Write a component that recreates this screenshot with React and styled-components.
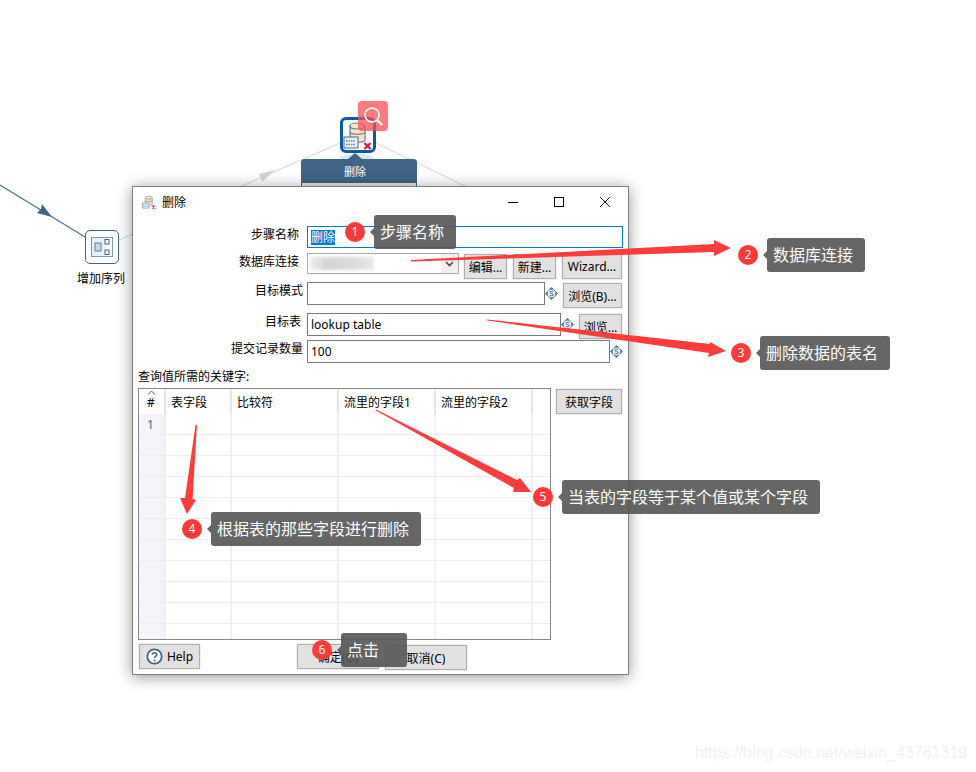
import styled, { createGlobalStyle } from "styled-components";

const GlobalStyle = createGlobalStyle`
  html, body { margin: 0; padding: 0; background: #fff; }
  body { font-family: "Noto Sans", "Noto Sans CJK SC", sans-serif; }
`;

const Page = styled.div`
  position: relative;
  width: 976px;
  height: 772px;
  overflow: hidden;
  background: #fff;
`;

const Layer = styled.svg`
  position: absolute;
  left: 0;
  top: 0;
  width: 976px;
  height: 772px;
  pointer-events: none;
`;

/* flow diagram behind the dialog */
const StepNode = styled.div`
  position: absolute;
  left: 85px;
  top: 230px;
  width: 34px;
  height: 34px;
  box-sizing: border-box;
  border: 1px solid #3f6484;
  border-radius: 5px;
  background: #fff;
  display: flex;
  align-items: center;
  justify-content: center;
`;

const StepLabel = styled.div`
  position: absolute;
  left: 61px;
  top: 270px;
  width: 80px;
  text-align: center;
  font-size: 12px;
  line-height: 18px;
  color: #000;
`;

const DeleteNode = styled.div`
  position: absolute;
  left: 340px;
  top: 117px;
  width: 36px;
  height: 36px;
  box-sizing: border-box;
  border: 3px solid #0b5aa6;
  border-radius: 6px;
  background: #fff;
  display: flex;
  align-items: center;
  justify-content: center;
`;

const SearchBadge = styled.div`
  position: absolute;
  left: 358px;
  top: 101px;
  width: 30px;
  height: 30px;
  border-radius: 4px;
  background: rgba(250, 80, 85, 0.75);
  display: flex;
  align-items: center;
  justify-content: center;
`;

const NodeMenu = styled.div`
  position: absolute;
  left: 301px;
  top: 159px;
  width: 116px;
  height: 27px;
  box-sizing: border-box;
  border: solid #3f6484;
  border-width: 0 1px;
  border-radius: 4px 4px 0 0;
  background: #e6e6e6;
  overflow: visible;
  &::before {
    content: "";
    position: absolute;
    left: 46px;
    top: -6px;
    border: solid transparent;
    border-width: 0 7px 6px;
    border-bottom-color: #3f6484;
  }
`;

const NodeMenuTitle = styled.div`
  height: 24px;
  margin: 0 -1px;
  padding-right: 8px;
  border-radius: 4px 4px 0 0;
  background: #3f6484;
  color: #fff;
  font-size: 11px;
  line-height: 25px;
  text-align: center;
`;

/* dialog window */
const Dialog = styled.div`
  position: absolute;
  left: 132px;
  top: 186px;
  width: 497px;
  height: 489px;
  box-sizing: border-box;
  border: 1px solid #7f7f7f;
  background: #fff;
  box-shadow: 0 2px 14px rgba(0, 0, 0, 0.42);
  display: flex;
  flex-direction: column;
  font-size: 12px;
  color: #000;
`;

const TitleBar = styled.div`
  height: 29px;
  display: flex;
  align-items: center;
  padding-left: 9px;
`;

const TitleText = styled.span`
  margin-left: 6px;
  font-size: 12px;
`;

const WindowButtons = styled.div`
  margin-left: auto;
  display: flex;
  align-items: center;
`;

const WindowButton = styled.div`
  width: 46px;
  height: 29px;
  display: flex;
  align-items: center;
  justify-content: center;
`;

const Form = styled.div`
  padding: 10px 5px 0 0;
  display: flex;
  flex-direction: column;
`;

const Row = styled.div`
  display: flex;
  align-items: flex-start;
  height: ${(p) => p.$h}px;
  margin-top: ${(p) => p.$top || 0}px;
`;

const Label = styled.div`
  width: 174px;
  box-sizing: border-box;
  padding-right: ${(p) => p.$pad}px;
  text-align: right;
  line-height: 17px;
  white-space: nowrap;
`;

const TextField = styled.div`
  width: ${(p) => p.$w}px;
  height: ${(p) => p.$height || 23}px;
  box-sizing: border-box;
  border: 1px solid ${(p) => (p.$focus ? "#0078d7" : "#7a7a7a")};
  padding-left: 3px;
  display: flex;
  align-items: center;
  font-size: 12px;
  background: #fff;
`;

const Selected = styled.span`
  background: #0078d7;
  color: #fff;
  line-height: 15px;
`;

const Select = styled.div`
  width: 152px;
  height: 21px;
  box-sizing: border-box;
  border: 1px solid #a9a9a9;
  display: flex;
  align-items: stretch;
  justify-content: space-between;
  position: relative;
`;

const Blur = styled.div`
  width: 64px;
  height: 13px;
  margin: 3px 0 0 2px;
  background: linear-gradient(90deg, #f0f0f0, #d4d4d4 25%, #dcdcdc 70%, #eaeaea);
  filter: blur(1.5px);
`;

const SelectArrow = styled.div`
  width: 17px;
  background: #f0f0f0;
  display: flex;
  align-items: center;
  justify-content: center;
`;

const Button = styled.div`
  width: ${(p) => p.$w}px;
  height: 25px;
  box-sizing: border-box;
  margin: ${(p) => p.$margin || "1px 0 0 6px"};
  border: 1px solid #adadad;
  box-shadow: 0 0 0 1px #f2f2f2;
  background: #e1e1e1;
  display: flex;
  align-items: center;
  justify-content: center;
  gap: 4px;
  font-size: 12px;
  white-space: nowrap;
`;

const VarSlot = styled.div`
  width: ${(p) => p.$w}px;
  height: 23px;
  display: flex;
  align-items: center;
  justify-content: flex-start;
`;

const SectionLabel = styled.div`
  margin: 5px 0 0 5px;
  height: 17px;
  line-height: 17px;
`;

const TableRow = styled.div`
  display: flex;
  align-items: flex-start;
  margin: 3px 0 0 5px;
`;

const Table = styled.div`
  width: 413px;
  height: 252px;
  box-sizing: border-box;
  border: 1px solid #828790;
  overflow: hidden;
`;

const Columns = styled.div`
  display: grid;
  grid-template-columns: 27px 66px 107px 97px 97px 17px;
  grid-auto-rows: 21px;
  &:first-child {
    grid-auto-rows: 25px;
  }
`;

const HeadCell = styled.div`
  position: relative;
  box-sizing: border-box;
  padding-left: ${(p) => p.$pad || 5}px;
  border-right: 2px solid #e5e5e5;
  border-top: 1px solid #fff;
  line-height: 25px;
  white-space: nowrap;
  &:last-child {
    border-right: 0;
  }
`;

const SortMark = styled.span`
  position: absolute;
  left: 8px;
  top: 0;
  line-height: 0;
`;

const Cell = styled.div`
  box-sizing: border-box;
  border-right: 2px solid #edf1f8;
  border-bottom: 1px solid #eceff3;
  padding-left: ${(p) => (p.$index ? 8 : 0)}px;
  background: ${(p) => (p.$index ? "#f5f5f7" : "#fff")};
  color: #3f6484;
  line-height: 21px;
  &:last-child {
    border-right: 0;
  }
`;

const Footer = styled.div`
  display: flex;
  align-items: flex-start;
  margin: 4px 0 0 6px;
`;

const FooterGroup = styled.div`
  display: flex;
  margin-left: 97px;
`;

/* red tutorial callouts */
const Callout = styled.div`
  position: absolute;
  left: ${(p) => p.$x}px;
  top: ${(p) => p.$y}px;
  height: 34px;
  display: flex;
  align-items: center;
  gap: 9px;
`;

const Badge = styled.div`
  width: 20px;
  height: 20px;
  border-radius: 50%;
  background: #ff3838;
  color: #fff;
  font-size: 12px;
  line-height: 20px;
  text-align: center;
`;

const Tip = styled.div`
  position: relative;
  height: 34px;
  min-width: ${(p) => p.$min || 0}px;
  box-sizing: border-box;
  padding: 0 12px 0 6px;
  border-radius: 3px;
  background: rgba(85, 85, 85, 0.9);
  color: #fff;
  font-size: 16px;
  line-height: 34px;
  white-space: nowrap;
  &::before {
    content: "";
    position: absolute;
    left: -4px;
    top: 13px;
    border: solid transparent;
    border-width: 4px 4px 4px 0;
    border-right-color: rgba(85, 85, 85, 0.9);
  }
`;

const Watermark = styled.div`
  position: absolute;
  left: 695px;
  top: 744px;
  font-family: "Liberation Sans", sans-serif;
  font-size: 16px;
  line-height: 18px;
  color: #f1f1f1;
  white-space: nowrap;
`;

const callouts = [
  { n: 1, x: 345, y: 215, text: "步骤名称" },
  { n: 2, x: 738, y: 238, text: "数据库连接" },
  { n: 3, x: 731, y: 336, text: "删除数据的表名" },
  { n: 4, x: 182, y: 512, text: "根据表的那些字段进行删除" },
  { n: 5, x: 533, y: 480, text: "当表的字段等于某个值或某个字段" },
  { n: 6, x: 312, y: 633, text: "点击", min: 66 },
];

const columns = ["表字段", "比较符", "流里的字段1", "流里的字段2", ""];

const VarIcon = () => (
  <svg width="13" height="13" viewBox="0 0 13 13">
    <path d="M6.5 0 13 6.5 6.5 13 0 6.5Z" fill="#4a7396" />
    <circle cx="6.5" cy="6.5" r="3.9" fill="#e6edf3" />
    <path d="M8.2 4.9C7.6 4 4.9 4 4.9 5.4c0 1.5 3.3 .8 3.3 2.3 0 1.3-2.8 1.3-3.4 .4" fill="none" stroke="#3f6484" strokeWidth="1" />
  </svg>
);

const DbIcon = ({ size }) => (
  <svg width={size} height={size} viewBox="0 0 30 30">
    <path d="M7 6c0-4 15-4 15 0v14c0 3-15 3-15 0Z" fill="#fde3c0" stroke="#5f7f99" strokeWidth="1.2" />
    <path d="M7 6c0 4 15 4 15 0M7 12c0 3 15 3 15 0" fill="none" stroke="#5f7f99" strokeWidth="1.2" />
    <rect x="1" y="17" width="14" height="11" fill="#eef3f7" stroke="#5f7f99" strokeWidth="1.2" />
    <path d="M3 21h10M3 24.5h10" stroke="#5f7f99" strokeWidth="1.4" strokeDasharray="1.5 1" />
    <path d="M21.5 23l6 6M27.5 23l-6 6" stroke="#e3192b" strokeWidth="2.2" />
  </svg>
);

const SequenceIcon = () => (
  <svg width="22" height="20" viewBox="0 0 22 20">
    <rect x=".5" y=".5" width="21" height="19" fill="#e8f1f8" stroke="#7f98ad" />
    <rect x="15" y="1" width="6" height="18" fill="#fff" />
    <rect x="4" y="6" width="6" height="8" fill="#c9d8e4" stroke="#5f7f99" />
    <rect x="14" y="2.5" width="4" height="4.5" fill="#fff" stroke="#3f6484" />
    <rect x="14" y="13" width="4" height="4.5" fill="#fff" stroke="#3f6484" />
  </svg>
);

const App = () => {
  const rows = Array.from({ length: 11 }, (_, i) => i);
  return (
    <Page>
      <GlobalStyle />
      <Layer viewBox="0 0 976 772">
        <path d="M119 240 340 143M376 143 467 187" stroke="#dcdcdc" strokeWidth="1.2" fill="none" />
        <path d="M0 185 85 237" stroke="#4d7391" strokeWidth="1.2" fill="none" />
        <path d="M52 217 37 213 41 209 42 204Z" fill="#3f6484" />
        <path d="M262 182 275 170 259 174Z" fill="#d4d4d4" />
        <ellipse cx="357" cy="158" rx="17" ry="4" fill="#dbe8f2" />
      </Layer>

      <StepNode>
        <SequenceIcon />
      </StepNode>
      <StepLabel>增加序列</StepLabel>

      <NodeMenu>
        <NodeMenuTitle>删除</NodeMenuTitle>
      </NodeMenu>
      <DeleteNode>
        <DbIcon size={30} />
      </DeleteNode>
      <SearchBadge>
        <svg width="30" height="30" viewBox="0 0 30 30">
          <circle cx="14" cy="14" r="7" fill="none" stroke="#fff" strokeWidth="1.6" />
          <path d="M19 19l5 5" stroke="#fff" strokeWidth="2.4" />
        </svg>
      </SearchBadge>

      <Dialog>
        <TitleBar>
          <DbIcon size={14} />
          <TitleText>删除</TitleText>
          <WindowButtons>
            <WindowButton>
              <svg width="10" height="10" viewBox="0 0 10 10">
                <path d="M0 5.5h10" stroke="#000" />
              </svg>
            </WindowButton>
            <WindowButton>
              <svg width="10" height="10" viewBox="0 0 10 10">
                <rect x=".5" y=".5" width="9" height="9" fill="none" stroke="#000" />
              </svg>
            </WindowButton>
            <WindowButton>
              <svg width="10" height="10" viewBox="0 0 10 10">
                <path d="M0 0 10 10M10 0 0 10" stroke="#000" strokeWidth=".9" />
              </svg>
            </WindowButton>
          </WindowButtons>
        </TitleBar>

        <Form>
          <Row $h={22}>
            <Label $pad={8}>步骤名称</Label>
            <TextField $w={316} $height={22} $focus>
              <Selected>删除</Selected>
            </TextField>
          </Row>
          <Row $h={26} $top={5}>
            <Label $pad={8}>数据库连接</Label>
            <Select>
              <Blur />
              <SelectArrow>
                <svg width="9" height="6" viewBox="0 0 9 6">
                  <path d="M1 1l3.5 3.5L8 1" fill="none" stroke="#444" strokeWidth="1.6" />
                </svg>
              </SelectArrow>
            </Select>
            <Button $w={43} $margin="1px 0 0 5px">编辑...</Button>
            <Button $w={43}>新建...</Button>
            <Button $w={60}>Wizard...</Button>
          </Row>
          <Row $h={26} $top={3}>
            <Label $pad={4}>目标模式</Label>
            <TextField $w={238} />
            <VarSlot $w={18}>
              <VarIcon />
            </VarSlot>
            <Button $w={59} $margin="1px 0 0 0">浏览(B)...</Button>
          </Row>
          <Row $h={26} $top={5}>
            <Label $pad={6}>目标表</Label>
            <TextField $w={254}>lookup table</TextField>
            <VarSlot $w={18}>
              <VarIcon />
            </VarSlot>
            <Button $w={43} $margin="1px 0 0 0">浏览...</Button>
          </Row>
          <Row $h={23} $top={1}>
            <Label $pad={4}>提交记录数量</Label>
            <TextField $w={303}>100</TextField>
            <VarSlot $w={13}>
              <VarIcon />
            </VarSlot>
          </Row>
        </Form>

        <SectionLabel>查询值所需的关键字:</SectionLabel>

        <TableRow>
          <Table>
            <Columns>
              <HeadCell $pad={8}>
                <SortMark>
                  <svg width="9" height="5" viewBox="0 0 9 5">
                    <path d="M1 4.5 4.5 1 8 4.5" fill="none" stroke="#555" />
                  </svg>
                </SortMark>
                #
              </HeadCell>
              {columns.map((name, i) => (
                <HeadCell key={i}>{name}</HeadCell>
              ))}
            </Columns>
            {rows.map((r) => (
              <Columns key={r}>
                <Cell $index>{r === 0 ? "1" : ""}</Cell>
                {columns.map((_, i) => (
                  <Cell key={i} />
                ))}
              </Columns>
            ))}
          </Table>
          <Button $w={66} $margin="1px 0 0 5px">获取字段</Button>
        </TableRow>

        <Footer>
          <Button $w={61} $margin="0">
            <svg width="17" height="17" viewBox="0 0 17 17">
              <circle cx="8.5" cy="8.5" r="7.2" fill="#fff" stroke="#3f6484" strokeWidth="1.8" />
              <path d="M6.2 6.6c.2-2.6 4.6-2.6 4.6 0 0 1.7-2.3 1.7-2.3 3.4" fill="none" stroke="#3f6484" strokeWidth="1.5" />
              <circle cx="8.5" cy="12.4" r="1" fill="#3f6484" />
            </svg>
            Help
          </Button>
          <FooterGroup>
            <Button $w={82} $margin="0">确定(O)</Button>
            <Button $w={82}>取消(C)</Button>
          </FooterGroup>
        </Footer>
      </Dialog>

      <Layer viewBox="0 0 976 772">
        <g fill="#ff3b3b">
          <polygon points="411,260 411,261.5 714,252 714,256 731,248 714,240 714,244" />
          <polygon points="487,319.5 487,320.5 709,353 708,357 726,351 710,342 710,344" />
          <polygon points="195.5,425 197,425 192.5,499 196,500 187,514 180,498 185,498" />
          <polygon points="375,410 376,409.5 517,480 520,478 531,492 513,492 514,488" />
        </g>
      </Layer>

      {callouts.map((c) => (
        <Callout key={c.n} $x={c.x} $y={c.y}>
          <Badge>{c.n}</Badge>
          <Tip $min={c.min}>{c.text}</Tip>
        </Callout>
      ))}

      <Watermark>https://blog.csdn.net/weixin_43761319</Watermark>
    </Page>
  );
};

export default App;
